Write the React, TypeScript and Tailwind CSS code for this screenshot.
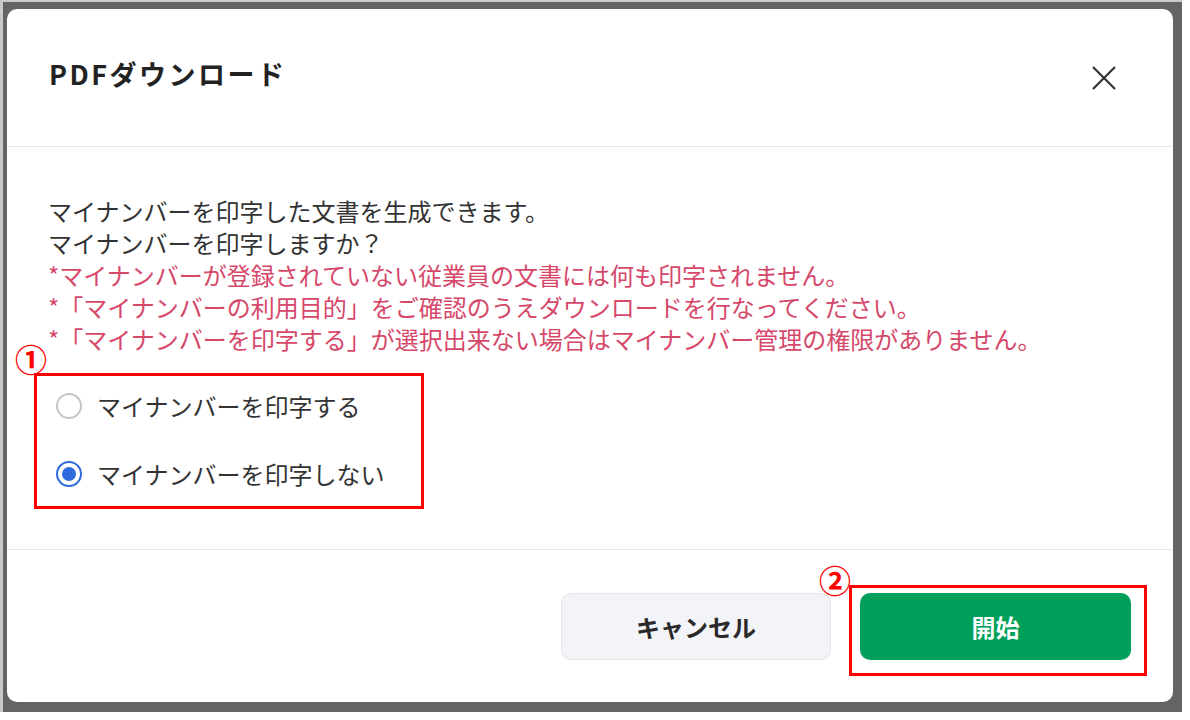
import React, { useState } from 'react';

type PrintMode = 'print' | 'noprint';

const jp = { fontFamily: '"Noto Sans CJK JP", "Noto Sans", sans-serif' };

function Radio({ checked, label, onClick }: { checked: boolean; label: string; onClick: () => void }) {
  return (
    <button className="flex items-center h-[60px] gap-[15px] text-left" onClick={onClick}>
      {checked ? (
        <span className="w-[26px] h-[26px] rounded-full border-2 border-[#2f6bdc] flex items-center justify-center">
          <span className="w-[14px] h-[14px] rounded-full bg-[#2f6bdc]" />
        </span>
      ) : (
        <span className="w-[26px] h-[26px] rounded-full border-2 border-[#c6c6c6]" />
      )}
      <span className="text-[24px] text-[#333]">{label}</span>
    </button>
  );
}

export default function App() {
  const [mode, setMode] = useState<PrintMode>('noprint');

  return (
    <div className="w-[1190px] h-[720px] bg-white" style={jp}>
      <div className="w-[1182px] h-[712px] border-t-2 border-l-[3px] border-[#c9c9c9] bg-[#646464] pt-[7px] pl-[4px] pr-[9px] pb-[10px]">
        <div className="h-full bg-white rounded-[10px] flex flex-col">
          {/* header */}
          <div className="h-[138px] flex items-center justify-between pl-[42px] pr-[57px] border-b border-[#e8e8ee]">
            <h1 className="text-[27px] font-bold tracking-[2.5px] text-[#222] -mt-[7px]">PDFダウンロード</h1>
            <button className="w-[24px] h-[24px]">
              <svg width="24" height="24" viewBox="0 0 24 24">
                <path d="M1 1 L23 23 M23 1 L1 23" stroke="#333" strokeWidth="2.2" fill="none" />
              </svg>
            </button>
          </div>

          {/* body */}
          <div className="h-[402px] pl-[41px] pt-[48px]">
            <div className="text-[24px] leading-[32px]">
              <p className="text-[#333]">マイナンバーを印字した文書を生成できます。</p>
              <p className="text-[#333]">マイナンバーを印字しますか？</p>
              <p className="text-[#d6486a]">*マイナンバーが登録されていない従業員の文書には何も印字されません。</p>
              <p className="text-[#d6486a]">*「マイナンバーの利用目的」をご確認のうえダウンロードを行なってください。</p>
              <p className="text-[#d6486a]">*「マイナンバーを印字する」が選択出来ない場合はマイナンバー管理の権限がありません。</p>
            </div>
            <div className="relative -ml-[14px] mt-[18px] w-[390px] h-[136px] border-[3px] border-[#ff0000] pl-[19px] flex flex-col gap-[8px]">
              <span className="absolute -left-[22px] -top-[38px] text-[32px] font-bold leading-[40px] text-[#ff0000]">①</span>
              <Radio checked={mode === 'print'} label="マイナンバーを印字する" onClick={() => setMode('print')} />
              <Radio checked={mode === 'noprint'} label="マイナンバーを印字しない" onClick={() => setMode('noprint')} />
            </div>
          </div>

          {/* footer */}
          <div className="flex-1 border-t border-[#e8e8ee] flex justify-end items-start pt-[35px] pr-[26px] gap-[18px]">
            <button className="mt-[8px] w-[270px] h-[67px] rounded-[10px] bg-[#f3f4f8] border border-[#e2e4ea] text-[24px] font-bold text-[#2a2a2a]">
              キャンセル
            </button>
            <div className="relative border-[3px] border-[#ff0000] pl-[8px] pt-[5px] pr-[13px] pb-[13px]">
              <span className="absolute -left-[33px] -top-[29px] text-[32px] font-bold leading-[40px] text-[#ff0000]">②</span>
              <button className="w-[271px] h-[67px] rounded-[10px] bg-[#00a05a] text-[24px] font-bold text-white">開始</button>
            </div>
          </div>
        </div>
      </div>
    </div>
  );
}
